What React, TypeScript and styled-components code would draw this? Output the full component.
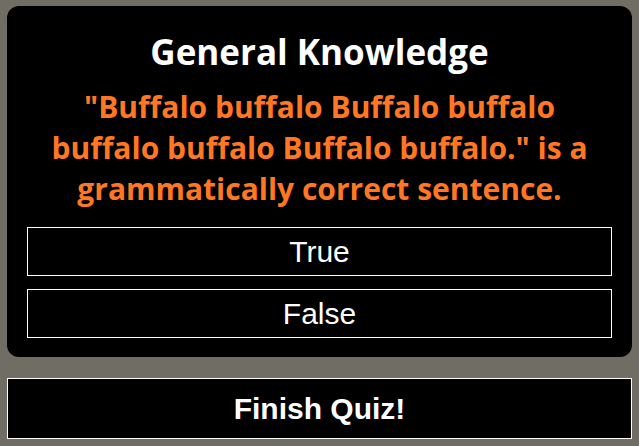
import React from 'react';
import styled, {createGlobalStyle} from 'styled-components';

const GlobalStyle = createGlobalStyle`
  html, body {
    margin: 0;
    padding: 0;
    background: #706d64;
  }
  * {
    box-sizing: border-box;
  }
`

const options = ['True', 'False'];

export default function App() {
    return (
        <>
            <GlobalStyle/>
            <Page>
                <Card>
                    <Title>General Knowledge</Title>
                    <Question>
                        "Buffalo buffalo Buffalo buffalo buffalo buffalo Buffalo buffalo." is a grammatically correct sentence.
                    </Question>
                    <Options>
                        {options.map(o => (
                            <OptionButton key={o}>{o}</OptionButton>
                        ))}
                    </Options>
                </Card>
                <FinishButton>Finish Quiz!</FinishButton>
            </Page>
        </>
    );
}

const Page = styled.main`
  display: flex;
  flex-direction: column;
  gap: 21px;
  padding: 6px 7px 0 7px;
`
const Card = styled.section`
  background: #000;
  border-radius: 12px;
  padding: 22px 20px 19px;
  display: flex;
  flex-direction: column;
  align-items: stretch;
`
const Title = styled.h2`
  margin: 0;
  font-family: "Open Sans", sans-serif;
  font-weight: 700;
  font-size: 35px;
  line-height: 48px;
  color: #fff;
  text-align: center;
`
const Question = styled.h3`
  margin: 10px 0 18px;
  font-family: "Open Sans", sans-serif;
  font-weight: 700;
  font-size: 30px;
  line-height: 41px;
  color: #ff7722;
  text-align: center;
  padding: 0 15px;
`
const Options = styled.div`
  display: flex;
  flex-direction: column;
  gap: 13px;
`
const OptionButton = styled.button`
  height: 49px;
  background: #000;
  border: 1px solid #fff;
  color: #fff;
  font-family: "Liberation Sans", Arial, sans-serif;
  font-size: 30px;
  cursor: pointer;
  padding: 0;
`
const FinishButton = styled.button`
  height: 61px;
  background: #000;
  border: 1px solid #fff;
  color: #fff;
  font-family: "Liberation Sans", Arial, sans-serif;
  font-weight: 700;
  font-size: 30px;
  cursor: pointer;
  padding: 0;
`
